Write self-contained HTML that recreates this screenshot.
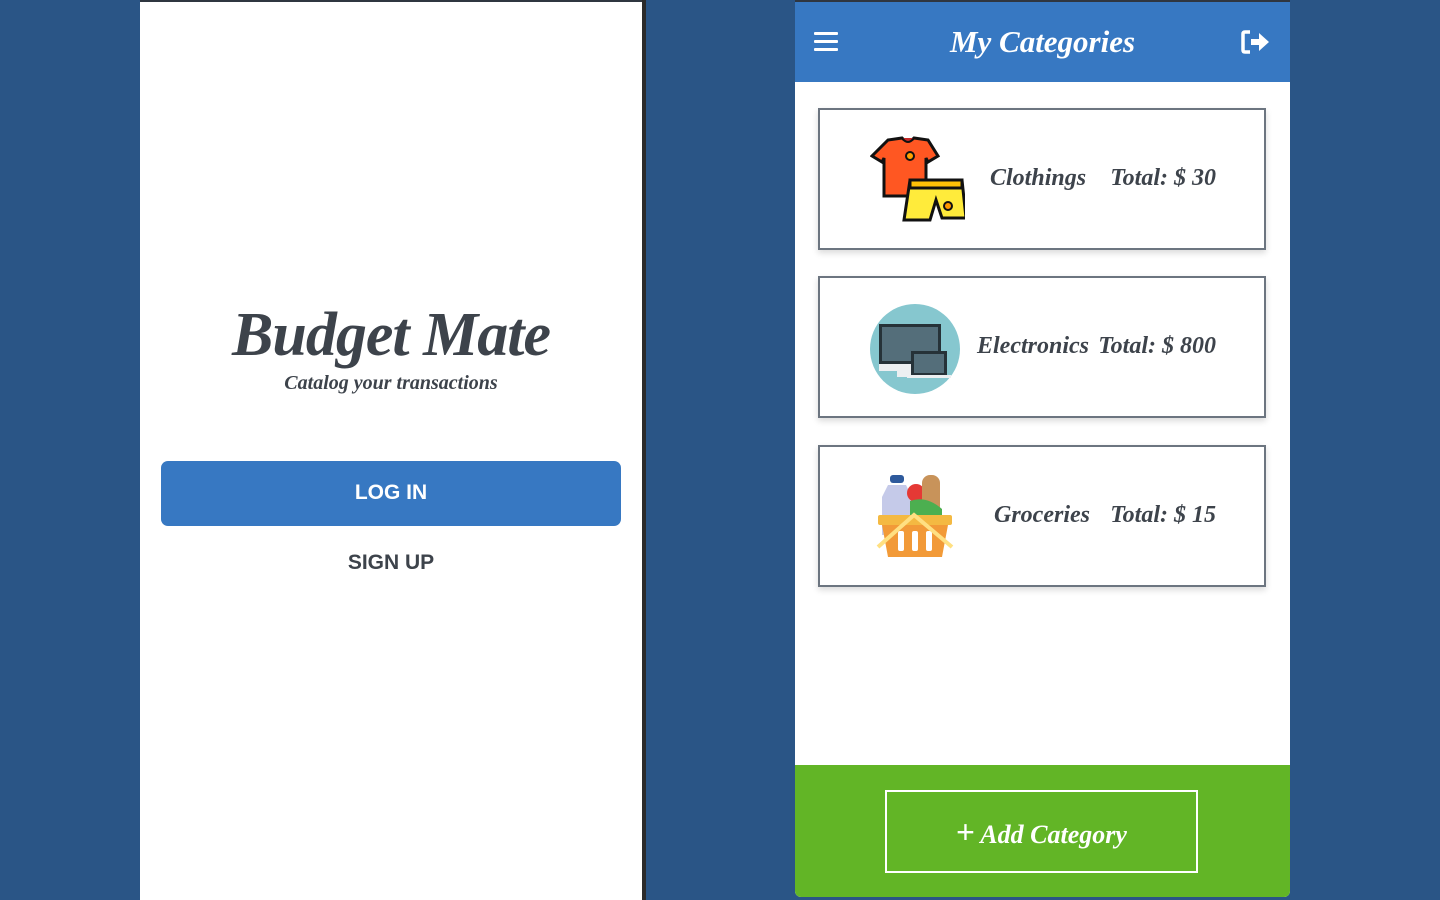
<!DOCTYPE html>
<html><head><meta charset="utf-8"><style>
*{margin:0;padding:0;box-sizing:border-box}
body{width:1440px;height:900px;background:#2a5586;position:relative;overflow:hidden;font-family:"Liberation Sans",sans-serif}
.script{font-family:"Liberation Serif",serif;font-style:italic;font-weight:bold}
#left{position:absolute;left:140px;top:0;width:502px;height:900px;background:#fff;border-top:2px solid #2f3640}
#strip{position:absolute;left:642px;top:0;width:4px;height:900px;background:#2b2b2b}
#title{position:absolute;left:0;width:502px;top:298px;text-align:center;font-size:62px;color:#3d434b;letter-spacing:-1px}
#sub{position:absolute;left:0;width:502px;top:370px;text-align:center;font-size:20px;color:#3d434b}
#login{position:absolute;left:21px;top:459px;width:460px;height:65px;background:#3778c2;border-radius:7px;color:#fff;font-weight:bold;font-size:21px;text-align:center;line-height:63px}
#signup{position:absolute;left:0;width:502px;top:549px;text-align:center;font-weight:bold;font-size:21px;color:#3d434b}
#right{position:absolute;left:795px;top:0;width:495px;height:897px;background:#fff;border-radius:0 0 6px 6px;overflow:hidden}
#hdr{position:absolute;left:0;top:0;width:495px;height:82px;background:#3778c2;border-top:2px solid #2f3640}
#hdr .t{position:absolute;left:0;width:495px;top:22px;text-align:center;color:#fff;font-size:31px}
.card{position:absolute;left:23px;width:448px;height:142px;border:2px solid #6c7580;background:#fff;box-shadow:0 3px 6px rgba(0,0,0,.15)}
.card .n,.card .v{position:absolute;top:55px;font-size:24px;color:#3d434b;white-space:nowrap}
.card .v{right:48px}
.card svg{position:absolute}
#foot{position:absolute;left:0;top:765px;width:495px;height:132px;background:#62b526}
#add{position:absolute;left:90px;top:25px;width:313px;height:83px;border:2px solid #fff;color:#fff;text-align:center;line-height:80px;font-size:26px}
</style></head><body>
<div id="left">
<div id="title" class="script">Budget Mate</div>
<div id="sub" class="script">Catalog your transactions</div>
<div id="login">LOG IN</div>
<div id="signup">SIGN UP</div>
</div>
<div id="strip"></div>
<div id="right">
<div id="hdr">
<svg style="position:absolute;left:19px;top:29px" width="24" height="22"><rect y="1" width="24" height="3" rx="1" fill="#fff"/><rect y="9" width="24" height="3" rx="1" fill="#fff"/><rect y="17" width="24" height="3" rx="1" fill="#fff"/></svg>
<div class="t script">My Categories</div>
<svg style="position:absolute;left:446px;top:28px" width="30" height="24" viewBox="0 0 30 24"><path d="M9 2H4Q2 2 2 4V20Q2 22 4 22H9" fill="none" stroke="#fff" stroke-width="3.5"/><path d="M10 9H18V3L28 12L18 21V15H10Z" fill="#fff"/></svg>
</div>
<div class="card" style="top:108px">
<svg style="left:50px;top:26px" width="95" height="88" viewBox="0 0 95 88"><path d="M18 4L32 2Q38 8 44 2L58 4L68 20L58 26L56 22V60H14V22L12 26L2 20Z" fill="#ff5722" stroke="#111" stroke-width="3"/><path d="M32 2Q38 10 44 2" fill="#c62828" stroke="#111" stroke-width="2"/><circle cx="40" cy="20" r="4" fill="#ffa000" stroke="#111" stroke-width="2"/><path d="M40 44H92L96 82H72L66 64L60 84H34Z" fill="#ffeb3b" stroke="#111" stroke-width="3"/><rect x="40" y="44" width="52" height="8" fill="#ffc107" stroke="#111" stroke-width="3"/><circle cx="78" cy="70" r="4" fill="#ff9800" stroke="#111" stroke-width="2"/></svg>
<div class="n script" style="left:170px">Clothings</div>
<div class="v script">Total: $ 30</div>
</div>
<div class="card" style="top:276px">
<svg style="left:49px;top:25px" width="92" height="92" viewBox="0 0 92 92"><circle cx="46" cy="46" r="45" fill="#86c7cf"/><rect x="10" y="21" width="62" height="40" fill="#263238"/><rect x="13" y="24" width="56" height="34" fill="#546e7a"/><rect x="10" y="61" width="62" height="7" fill="#eceff1"/><rect x="28" y="68" width="18" height="6" fill="#eceff1"/><rect x="42" y="48" width="36" height="24" fill="#263238"/><rect x="45" y="51" width="30" height="19" fill="#546e7a"/><rect x="38" y="72" width="44" height="3" fill="#eceff1"/></svg>
<div class="n script" style="left:157px">Electronics</div>
<div class="v script">Total: $ 800</div>
</div>
<div class="card" style="top:445px">
<svg style="left:56px;top:24px" width="80" height="92" viewBox="0 0 80 92"><rect x="14" y="4" width="14" height="8" rx="3" fill="#2e5a9c"/><path d="M12 14H30L36 26V64H6V26Z" fill="#c5cae9"/><circle cx="40" cy="22" r="9" fill="#e53935"/><rect x="46" y="4" width="18" height="40" rx="8" fill="#c8935a"/><path d="M34 30Q50 24 66 38V60H34Z" fill="#4caf50"/><rect x="2" y="44" width="74" height="10" rx="2" fill="#f4b942"/><path d="M6 54H72L66 86H12Z" fill="#f29a38"/><rect x="22" y="60" width="6" height="20" rx="2" fill="#fff"/><rect x="36" y="60" width="6" height="20" rx="2" fill="#fff"/><rect x="50" y="60" width="6" height="20" rx="2" fill="#fff"/><path d="M2 76L38 44L76 76" fill="none" stroke="#ffe082" stroke-width="4"/></svg>
<div class="n script" style="left:174px">Groceries</div>
<div class="v script">Total: $ 15</div>
</div>
<div id="foot"><div id="add" class="script"><span style="font-style:normal;font-family:'Liberation Sans';font-weight:normal;font-size:32px">+</span> Add Category</div></div>
</div>
</body></html>
